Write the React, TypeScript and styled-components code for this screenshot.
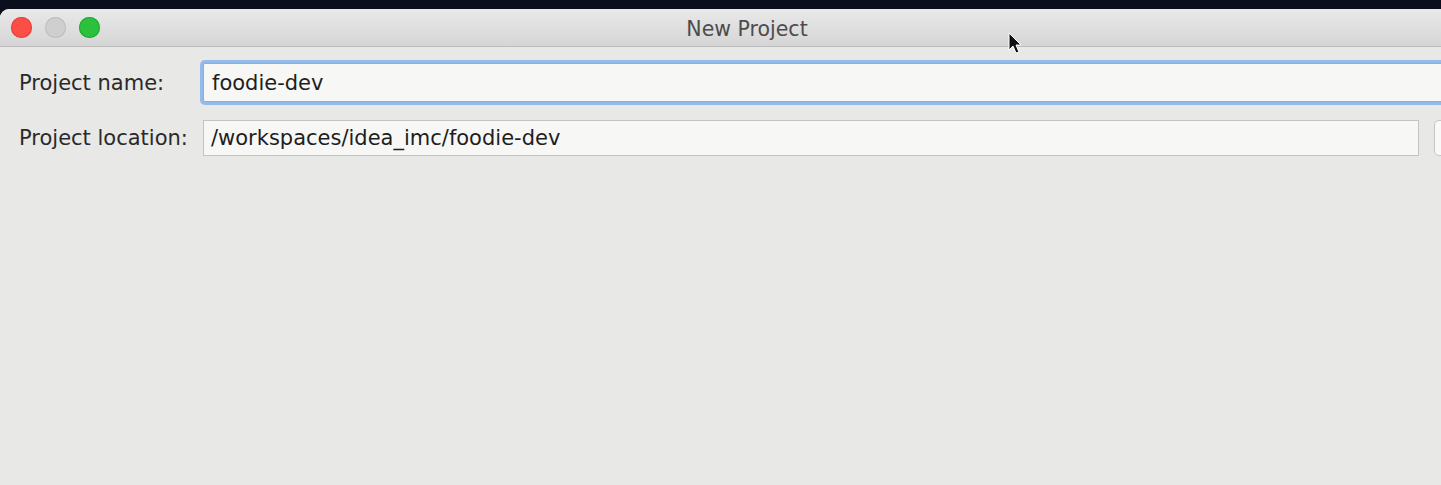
import * as React from 'react';
import styled, { createGlobalStyle } from 'styled-components';

const GlobalStyle = createGlobalStyle`
  html, body {
    margin: 0;
    padding: 0;
    background: #0b0e1c;
    font-family: 'DejaVu Sans', 'Liberation Sans', sans-serif;
  }
`;

const Screen = styled.div`
  position: relative;
  width: 1441px;
  height: 485px;
  overflow: hidden;
  background: #0b0e1c;
  padding-top: 9px;
  box-sizing: border-box;
`;

const Window = styled.div`
  width: 1494px;
  height: 100%;
  background: #e8e8e7;
  border-top-left-radius: 9px;
  overflow: hidden;
  display: flex;
  flex-direction: column;
`;

const TitleBar = styled.div`
  height: 37px;
  flex: none;
  display: grid;
  grid-template-columns: 1fr auto 1fr;
  align-items: center;
  background: linear-gradient(#e9e9e9, #d5d5d5);
  border-bottom: 1px solid #bdbdbd;
`;

const Lights = styled.div`
  display: flex;
  gap: 13px;
  padding-left: 11px;
`;

const Light = styled.span<{ $color: string; $edge: string }>`
  width: 21px;
  height: 21px;
  border-radius: 50%;
  background: ${p => p.$color};
  box-shadow: inset 0 0 0 1px ${p => p.$edge};
`;

const Title = styled.div`
  font-size: 20.5px;
  color: #4c4c4c;
  padding-top: 2px;
`;

const Form = styled.div`
  display: grid;
  grid-template-columns: 184px 1fr auto;
  row-gap: 18px;
  align-items: center;
  padding: 16px 0 0 19px;
`;

const Label = styled.label`
  font-size: 21px;
  color: #2a2a2a;
`;

const Field = styled.div<{ $focused?: boolean }>`
  height: ${p => (p.$focused ? '39px' : '36px')};
  box-sizing: border-box;
  display: flex;
  align-items: center;
  padding-left: ${p => (p.$focused ? '8px' : '7px')};
  font-size: 21px;
  color: #1e1e1e;
  background: #f7f7f6;
  border: 1px solid ${p => (p.$focused ? '#86aee4' : '#c3c3c3')};
  box-shadow: ${p => (p.$focused ? '0 0 0 3px #94baec' : 'none')};
  border-radius: ${p => (p.$focused ? '2px' : '0')};
  grid-column: ${p => (p.$focused ? 'span 2' : 'auto')};
`;

const BrowseButton = styled.div`
  width: 60px;
  height: 36px;
  margin-left: 15px;
  box-sizing: border-box;
  background: #f9f9f9;
  border: 1px solid #c6c6c6;
  border-radius: 5px;
`;

const Pointer = styled.svg`
  position: absolute;
  left: 1008px;
  top: 32px;
`;

export default function App() {
  return (
    <>
      <GlobalStyle />
      <Screen>
        <Window>
          <TitleBar>
            <Lights>
              <Light $color="#fc4d47" $edge="#e0443e" />
              <Light $color="#cfcfcf" $edge="#bdbdbd" />
              <Light $color="#2bc13d" $edge="#22a833" />
            </Lights>
            <Title>New Project</Title>
            <div />
          </TitleBar>
          <Form>
            <Label>Project name:</Label>
            <Field $focused>foodie-dev</Field>
            <Label>Project location:</Label>
            <Field>/workspaces/idea_imc/foodie-dev</Field>
            <BrowseButton />
          </Form>
        </Window>
        <Pointer width="16" height="24" viewBox="0 0 16 24">
          <path
            d="M1 1 L1 18 L5 14 L8 21 L11 20 L8 13 L13 13 Z"
            fill="#111"
            stroke="#fff"
            strokeWidth="1"
            strokeLinejoin="round"
          />
        </Pointer>
      </Screen>
    </>
  );
}
